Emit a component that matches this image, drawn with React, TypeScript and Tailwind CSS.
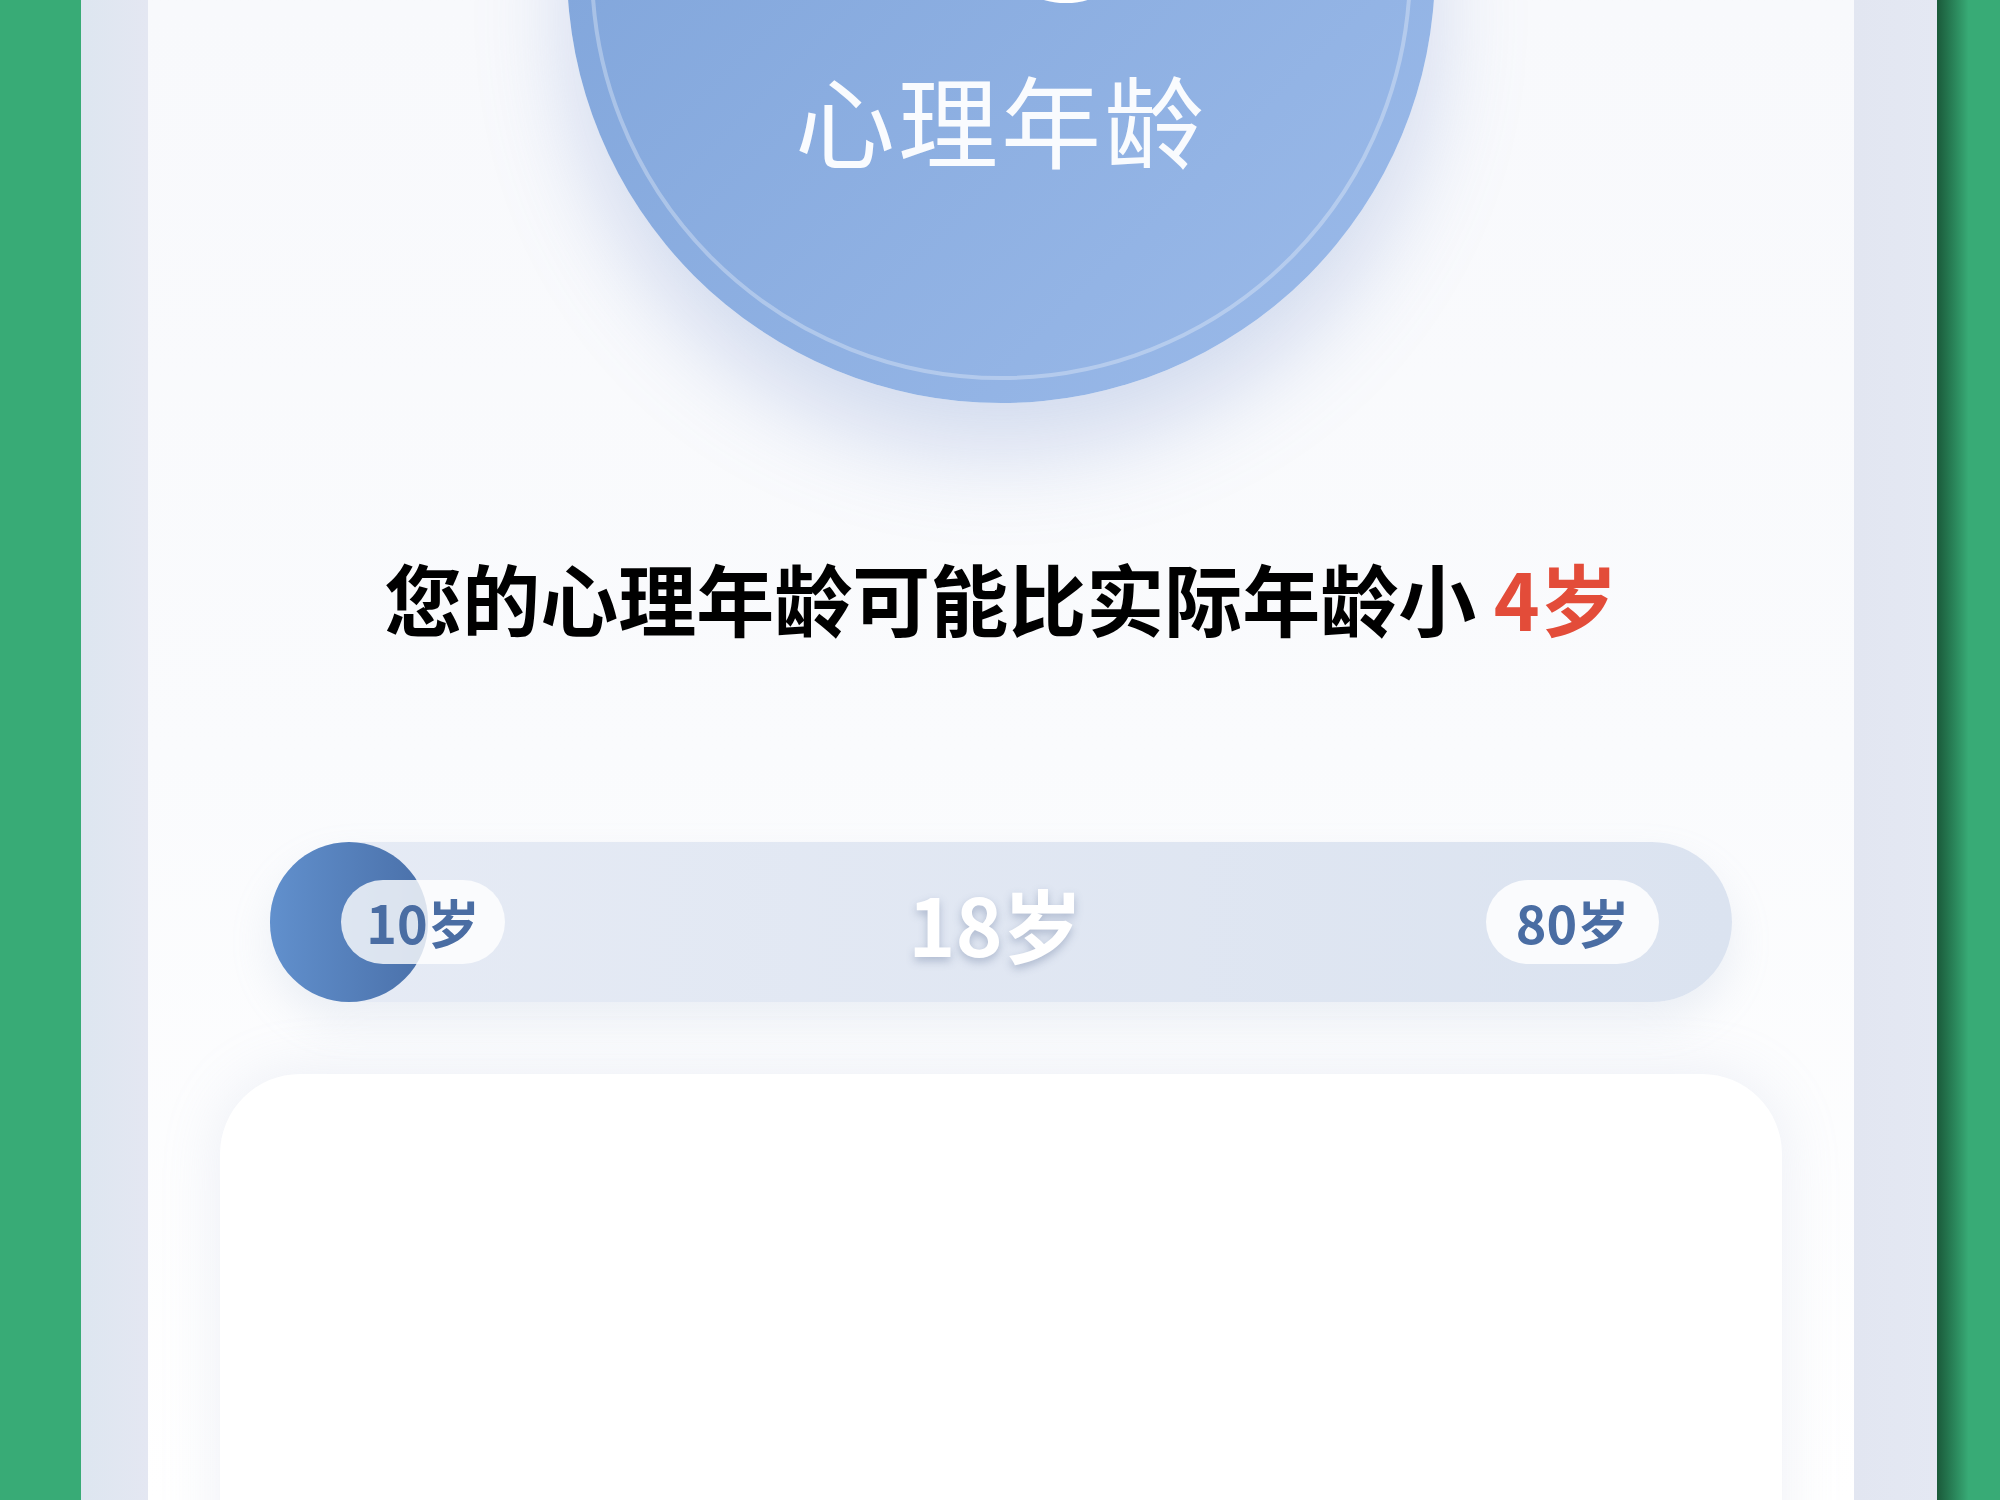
import React from "react";

const font = { fontFamily: '"Noto Sans CJK SC", "Noto Sans", sans-serif' };

const AgeBar = () => {
  return (
    <div className="relative mx-[122px] mt-[206px] h-[160px] rounded-full bg-gradient-to-r from-[#e6ebf5] to-[#dbe3f0] shadow-[0_20px_40px_rgba(160,175,205,0.18)]">
      {/* marker */}
      <div className="absolute left-0 top-0 h-[160px] w-[158px] rounded-full bg-gradient-to-r from-[#6190cd] to-[#4a70a9]" />
      <div className="relative flex h-full items-center justify-between pl-[71px] pr-[73px]">
        <div className="flex h-[84px] w-[164px] items-center justify-center rounded-full bg-white/80">
          <span className="text-[52px] font-bold leading-none text-[#4a6da3]">10岁</span>
        </div>
        <span className="text-[80px] font-bold leading-none text-white [text-shadow:0_4px_8px_rgba(80,100,140,0.35)]">
          18岁
        </span>
        <div className="flex h-[84px] w-[173px] items-center justify-center rounded-full bg-white/85">
          <span className="text-[52px] font-bold leading-none text-[#4a6da3]">80岁</span>
        </div>
      </div>
    </div>
  );
};

const App = () => {
  return (
    <div className="flex h-[1500px] w-[2000px] overflow-hidden bg-[#38ab76]" style={font}>
      <div className="w-[81px] shrink-0 bg-[#38ab76]" />
      <div className="w-[67px] shrink-0 bg-gradient-to-r from-[#dde6f0] to-[#e4e7f2]" />

      {/* main panel */}
      <div className="relative flex-1 overflow-hidden bg-gradient-to-b from-[#f8f9fc] via-[#fafbfd] to-white">
        <div className="flex flex-col items-center">
          <div className="mt-[-465px] flex h-[868px] w-[868px] items-center justify-center rounded-full bg-gradient-to-br from-[#7aa0d7] to-[#9cbbea] shadow-[0_50px_90px_rgba(110,140,205,0.28)]">
            <div className="flex h-[822px] w-[822px] flex-col items-center justify-end rounded-full border-[4px] border-white/30 pb-[208px]">
              <span className="mb-[76px] text-[220px] font-bold leading-[0.8] text-white">18</span>
              <span className="text-[100px] font-normal leading-none tracking-[3px] text-white/95">心理年龄</span>
            </div>
          </div>
        </div>

        <p className="mt-[155px] text-center text-[78px] font-bold leading-none text-black">
          您的心理年龄可能比实际年龄小 <span className="text-[#e34c39]">4岁</span>
        </p>

        <AgeBar />

        <div className="mx-[72px] mt-[72px] h-[600px] rounded-[80px] bg-white shadow-[0_0_60px_rgba(170,180,210,0.2)]" />
      </div>

      <div className="w-[83px] shrink-0 bg-gradient-to-r from-[#e2e6f1] to-[#e4e8f3]" />
      <div className="w-[63px] shrink-0 bg-gradient-to-r from-[#1a5a3a] via-[#38ab76] to-[#38ab76]" />
    </div>
  );
};

export default App;
